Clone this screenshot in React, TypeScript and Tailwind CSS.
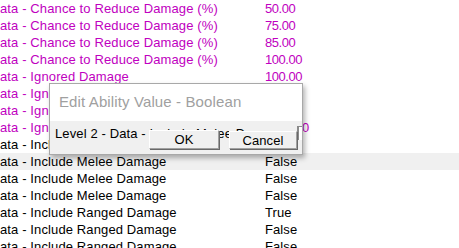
const rows: { label: string; value: string; pink?: boolean }[] = [
  { label: 'ata - Chance to Reduce Damage (%)', value: '50.00', pink: true },
  { label: 'ata - Chance to Reduce Damage (%)', value: '75.00', pink: true },
  { label: 'ata - Chance to Reduce Damage (%)', value: '85.00', pink: true },
  { label: 'ata - Chance to Reduce Damage (%)', value: '100.00', pink: true },
  { label: 'ata - Ignored Damage', value: '100.00', pink: true },
  { label: 'ata - Ignored Damage', value: '100.00', pink: true },
  { label: 'ata - Ignored Damage', value: '100.00', pink: true },
  { label: 'ata - Ignored Damage', value: '1000.00', pink: true },
  { label: 'ata - Include Melee Damage', value: 'False' },
  { label: 'ata - Include Melee Damage', value: 'False' },
  { label: 'ata - Include Melee Damage', value: 'False' },
  { label: 'ata - Include Melee Damage', value: 'False' },
  { label: 'ata - Include Ranged Damage', value: 'True' },
  { label: 'ata - Include Ranged Damage', value: 'False' },
  { label: 'ata - Include Ranged Damage', value: 'False' },
]

export default function App() {
  return (
    <div className="relative w-[459px] h-[248px] overflow-hidden bg-white font-['Liberation_Sans',Arial,sans-serif] text-[13px]">
      {/* list */}
      <div className="flex flex-col">
        {rows.map((row, i) => (
          <div
            key={i}
            className={`flex h-[17px] shrink-0 items-center leading-[17px] ${i === 9 ? 'bg-[#f0f0f0]' : ''} ${row.pink ? 'text-[#c000c0]' : 'text-black'}`}
          >
            <div className="w-[265px] shrink-0 whitespace-nowrap tracking-[0.12px]">{row.label}</div>
            <div className={`whitespace-nowrap ${row.pink ? 'tracking-[-0.45px]' : 'tracking-[0.1px]'}`}>{row.value}</div>
          </div>
        ))}
      </div>

      {/* dialog */}
      <div className="absolute left-[49px] top-[83px] w-[254px] h-[72px] border border-[#a8a8a8] bg-white shadow-[2px_3px_5px_rgba(0,0,0,0.3)] flex flex-col tracking-[0.12px]">
        <div className="h-[37px] shrink-0 flex items-center pl-[9px] text-[15px] text-[#a0a0a0] whitespace-nowrap">
          Edit Ability Value - Boolean
        </div>
        <div className="relative flex-1 bg-[#f0f0f0] overflow-hidden">
          <div className="pl-[5px] pt-[5px] leading-[15px] whitespace-nowrap text-black">
            Level 2 - Data - Include Melee Damage
          </div>
          <div className="absolute left-[247px] top-[5px] w-[7px] h-[14px] border-l-2 border-t border-[#8a8a8a] bg-white" />
          <div className="absolute left-[99px] top-[9px] w-[70px] h-[19px] flex items-center justify-center bg-[#f0f0f0] border border-t-white border-l-white border-r-[#a0a0a0] border-b-[#a0a0a0] shadow-[1px_1px_0_#696969] text-black leading-none">
            OK
          </div>
          <div className="absolute left-[179px] top-[10px] w-[68px] h-[18px] flex items-center justify-center bg-[#f0f0f0] border border-t-white border-l-white border-r-[#a0a0a0] border-b-[#a0a0a0] shadow-[1px_1px_0_#696969] text-black leading-none">
            Cancel
          </div>
        </div>
      </div>
    </div>
  )
}
